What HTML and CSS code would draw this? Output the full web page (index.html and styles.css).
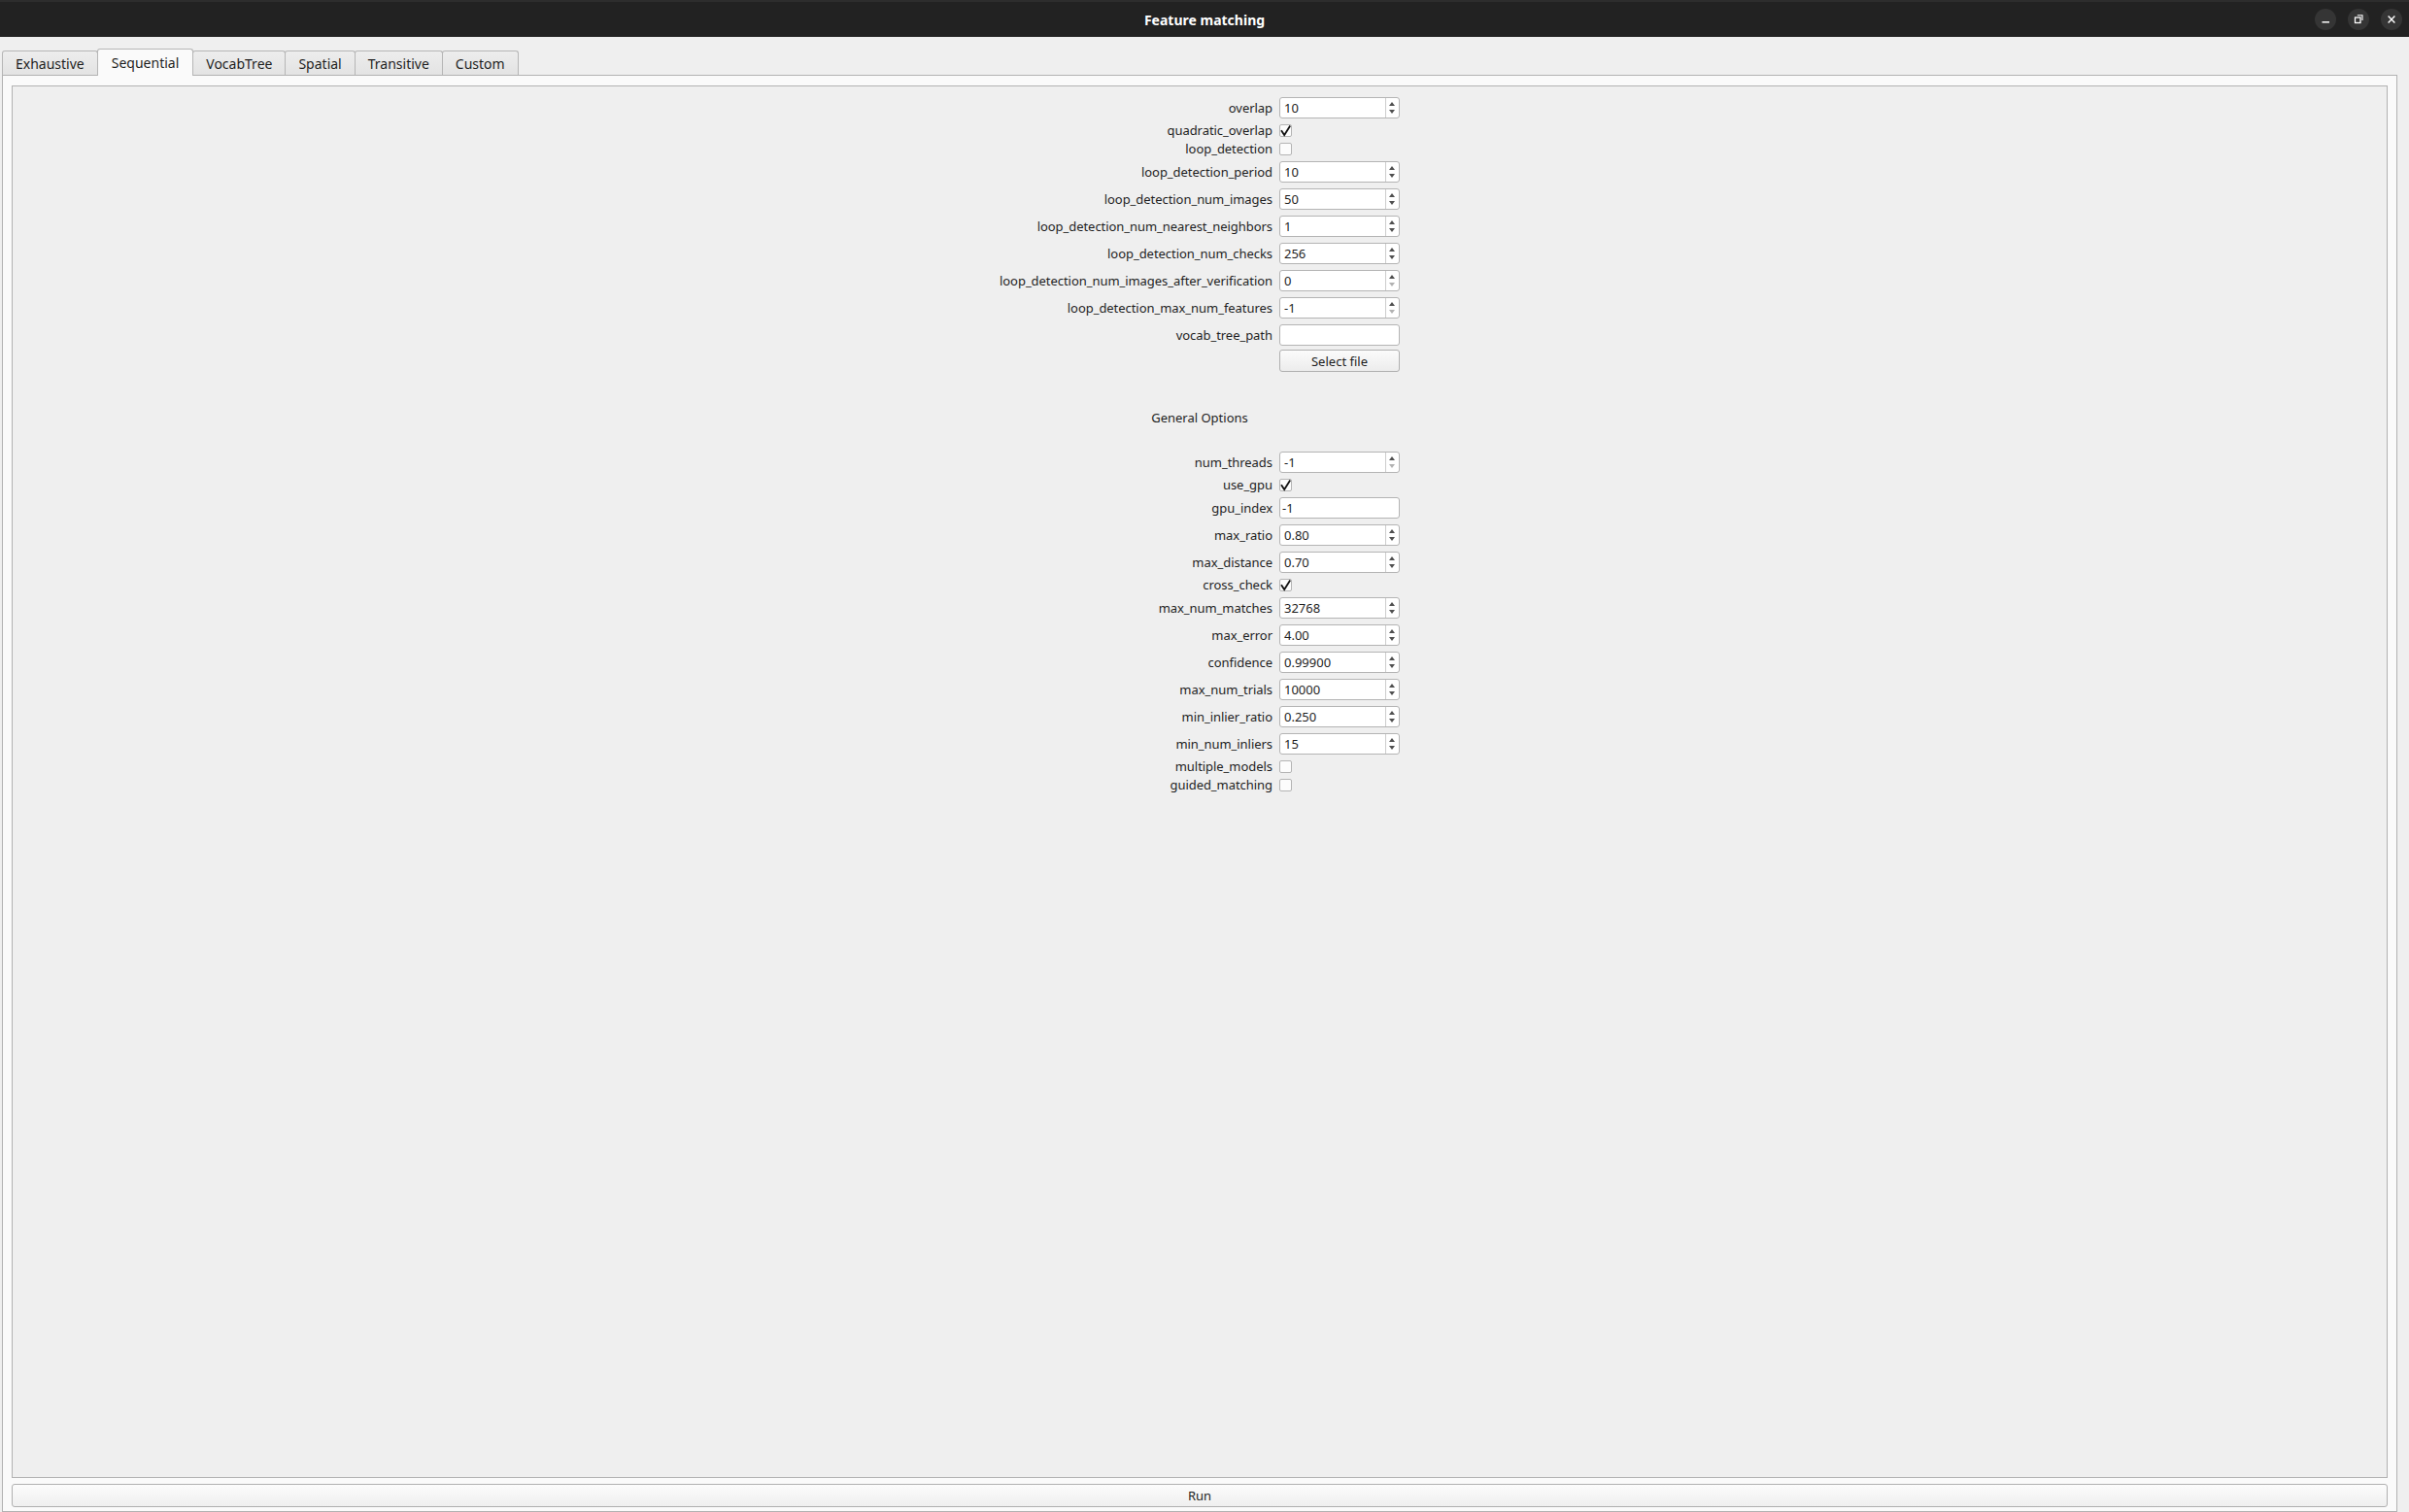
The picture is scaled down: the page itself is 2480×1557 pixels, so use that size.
FILE: index.html
```html
<!DOCTYPE html>
<html lang="en">
<head>
<meta charset="utf-8">
<title>Feature matching</title>
<link rel="stylesheet" href="styles.css">
</head>
<body>
<div class="window">
  <header class="titlebar">
    <span class="title">Feature matching</span>
    <div class="controls">
      <span class="ctl"><svg width="22" height="22" viewBox="0 0 22 22"><line x1="7.5" y1="13.8" x2="15" y2="13.8" stroke="#fff" stroke-width="1.5"/></svg></span>
      <span class="ctl"><svg width="22" height="22" viewBox="0 0 22 22"><rect x="7.5" y="9" width="5.5" height="5.5" fill="none" stroke="#fff" stroke-width="1.3"/><path d="M9.8 6.8 H15 V12" fill="none" stroke="#fff" stroke-width="1.1"/></svg></span>
      <span class="ctl"><svg width="22" height="22" viewBox="0 0 22 22"><path d="M7.6 7.6 L14.4 14.4 M14.4 7.6 L7.6 14.4" stroke="#fff" stroke-width="1.4"/></svg></span>
    </div>
  </header>
  <main class="content">
    <nav class="tabs">
      <span class="tab">Exhaustive</span>
      <span class="tab active">Sequential</span>
      <span class="tab">VocabTree</span>
      <span class="tab">Spatial</span>
      <span class="tab">Transitive</span>
      <span class="tab">Custom</span>
    </nav>
    <section class="panel">
      <div class="frame">
        <div class="form">
          <span class="lbl">overlap</span>
          <div class="spin"><span class="val">10</span><span class="btns"><i class="up"></i><i class="dn"></i></span></div>

          <span class="lbl cbl">quadratic_overlap</span>
          <span class="cb"><svg width="13" height="13" viewBox="0 0 13 13"><polyline points="2,6.2 5.2,11 11.2,1.6" fill="none" stroke="#111" stroke-width="1.8"/></svg></span>

          <span class="lbl cbl">loop_detection</span>
          <span class="cb"></span>

          <span class="lbl">loop_detection_period</span>
          <div class="spin"><span class="val">10</span><span class="btns"><i class="up"></i><i class="dn"></i></span></div>

          <span class="lbl">loop_detection_num_images</span>
          <div class="spin"><span class="val">50</span><span class="btns"><i class="up"></i><i class="dn"></i></span></div>

          <span class="lbl">loop_detection_num_nearest_neighbors</span>
          <div class="spin"><span class="val">1</span><span class="btns"><i class="up"></i><i class="dn"></i></span></div>

          <span class="lbl">loop_detection_num_checks</span>
          <div class="spin"><span class="val">256</span><span class="btns"><i class="up"></i><i class="dn"></i></span></div>

          <span class="lbl">loop_detection_num_images_after_verification</span>
          <div class="spin"><span class="val">0</span><span class="btns"><i class="up"></i><i class="dn off"></i></span></div>

          <span class="lbl">loop_detection_max_num_features</span>
          <div class="spin"><span class="val">-1</span><span class="btns"><i class="up"></i><i class="dn off"></i></span></div>

          <span class="lbl">vocab_tree_path</span>
          <div class="edit"></div>

          <span class="lbl"></span>
          <span class="btn">Select file</span>

          <span class="section">General Options</span>

          <span class="lbl">num_threads</span>
          <div class="spin"><span class="val">-1</span><span class="btns"><i class="up"></i><i class="dn off"></i></span></div>

          <span class="lbl cbl">use_gpu</span>
          <span class="cb"><svg width="13" height="13" viewBox="0 0 13 13"><polyline points="2,6.2 5.2,11 11.2,1.6" fill="none" stroke="#111" stroke-width="1.8"/></svg></span>

          <span class="lbl">gpu_index</span>
          <div class="edit">-1</div>

          <span class="lbl">max_ratio</span>
          <div class="spin"><span class="val">0.80</span><span class="btns"><i class="up"></i><i class="dn"></i></span></div>

          <span class="lbl">max_distance</span>
          <div class="spin"><span class="val">0.70</span><span class="btns"><i class="up"></i><i class="dn"></i></span></div>

          <span class="lbl cbl">cross_check</span>
          <span class="cb"><svg width="13" height="13" viewBox="0 0 13 13"><polyline points="2,6.2 5.2,11 11.2,1.6" fill="none" stroke="#111" stroke-width="1.8"/></svg></span>

          <span class="lbl">max_num_matches</span>
          <div class="spin"><span class="val">32768</span><span class="btns"><i class="up"></i><i class="dn"></i></span></div>

          <span class="lbl">max_error</span>
          <div class="spin"><span class="val">4.00</span><span class="btns"><i class="up"></i><i class="dn"></i></span></div>

          <span class="lbl">confidence</span>
          <div class="spin"><span class="val">0.99900</span><span class="btns"><i class="up"></i><i class="dn"></i></span></div>

          <span class="lbl">max_num_trials</span>
          <div class="spin"><span class="val">10000</span><span class="btns"><i class="up"></i><i class="dn"></i></span></div>

          <span class="lbl">min_inlier_ratio</span>
          <div class="spin"><span class="val">0.250</span><span class="btns"><i class="up"></i><i class="dn"></i></span></div>

          <span class="lbl">min_num_inliers</span>
          <div class="spin"><span class="val">15</span><span class="btns"><i class="up"></i><i class="dn"></i></span></div>

          <span class="lbl cbl">multiple_models</span>
          <span class="cb"></span>

          <span class="lbl cbl">guided_matching</span>
          <span class="cb"></span>
        </div>
      </div>
      <button class="run">Run</button>
    </section>
  </main>
</div>
</body>
</html>
```

FILE: styles.css
```css
html, body {
  margin: 0;
  height: 100%;
}

body {
  background: #efefef;
  font-family: "Noto Sans", "DejaVu Sans", sans-serif;
  font-size: 13px;
  color: #1e1e1e;
}

.window {
  display: flex;
  flex-direction: column;
  height: 100vh;
}

/* title bar */
.titlebar {
  flex: 0 0 38px;
  box-sizing: border-box;
  background: #222222;
  border-top: 2px solid #2d2d2d;
  display: grid;
  grid-template-columns: 1fr auto 1fr;
  align-items: center;
}

.title {
  grid-column: 2;
  color: #ffffff;
  font-weight: 700;
  font-size: 14px;
}

.controls {
  grid-column: 3;
  justify-self: end;
  display: flex;
  gap: 12px;
  margin-right: 7px;
}

.ctl {
  width: 22px;
  height: 22px;
  border-radius: 50%;
  background: #353535;
  display: block;
}

.ctl svg {
  display: block;
}

/* content */
.content {
  flex: 1;
  min-height: 0;
  display: flex;
  flex-direction: column;
  padding: 14px 12px 0 2px;
}

.tabs {
  display: flex;
  align-items: flex-end;
  height: 25px;
  position: relative;
  z-index: 1;
}

.tab {
  height: 25px;
  box-sizing: border-box;
  padding: 0 13px;
  border: 1px solid #b6b6b6;
  border-bottom: none;
  border-radius: 3px 3px 0 0;
  background: linear-gradient(#ededed, #e3e3e3);
  display: flex;
  align-items: center;
  font-size: 14px;
  margin-right: -1px;
  color: #1e1e1e;
}

.tab.active {
  height: 28px;
  margin-bottom: -1px;
  padding: 0 14px 1px;
  background: #fafafa;
}

.panel {
  flex: 1;
  min-height: 0;
  display: flex;
  flex-direction: column;
  gap: 6px;
  border: 1px solid #b2b2b2;
  background: #fafafa;
  padding: 10px 9px 4px 9px;
}

.frame {
  flex: 1;
  min-height: 0;
  border: 1px solid #b2b2b2;
  background: #efefef;
  display: flex;
  justify-content: center;
  align-items: flex-start;
  padding-top: 11px;
}

.run {
  height: 24px;
  border: 1px solid #b0b0b0;
  border-radius: 3px;
  background: linear-gradient(#fcfcfc, #efefef);
  font-family: inherit;
  font-size: 13px;
  color: #1e1e1e;
  padding: 0;
}

/* form */
.form {
  display: grid;
  grid-template-columns: auto 124px;
  column-gap: 7px;
  row-gap: 6px;
  align-items: center;
}

.lbl {
  justify-self: end;
  white-space: nowrap;
  letter-spacing: -0.05px;
}

.cbl {
  line-height: 13px;
}

.section {
  grid-column: 1 / 3;
  justify-self: center;
  line-height: 18px;
  margin: 32px 0 20px;
}

.spin {
  height: 22px;
  box-sizing: border-box;
  border: 1px solid #b4b4b4;
  border-radius: 3px;
  background: #ffffff;
  display: flex;
}

.val {
  flex: 1;
  display: flex;
  align-items: center;
  padding-left: 4px;
}

.btns {
  width: 13px;
  border-left: 1px solid #cdcdcd;
  display: flex;
  flex-direction: column;
  align-items: center;
  justify-content: center;
  gap: 4px;
}

.btns i {
  display: block;
  width: 0;
  height: 0;
  border-left: 3.5px solid transparent;
  border-right: 3.5px solid transparent;
}

.btns .up {
  border-bottom: 4px solid #505050;
}

.btns .dn {
  border-top: 4px solid #505050;
}

.btns .dn.off {
  border-top-color: #b2b2b2;
}

.edit {
  height: 22px;
  box-sizing: border-box;
  border: 1px solid #b4b4b4;
  border-radius: 3px;
  background: #ffffff;
  padding-left: 2px;
  display: flex;
  align-items: center;
}

.btn {
  height: 23px;
  box-sizing: border-box;
  border: 1px solid #b0b0b0;
  border-radius: 3px;
  background: linear-gradient(#fbfbfb, #ececec);
  display: flex;
  align-items: center;
  justify-content: center;
  margin-top: -2px;
}

.cb {
  width: 13px;
  height: 13px;
  box-sizing: border-box;
  border: 1px solid #b4b4b4;
  border-radius: 2px;
  background: #fcfcfc;
  display: block;
}

.cb svg {
  display: block;
  margin: -1px;
  overflow: visible;
}
```
